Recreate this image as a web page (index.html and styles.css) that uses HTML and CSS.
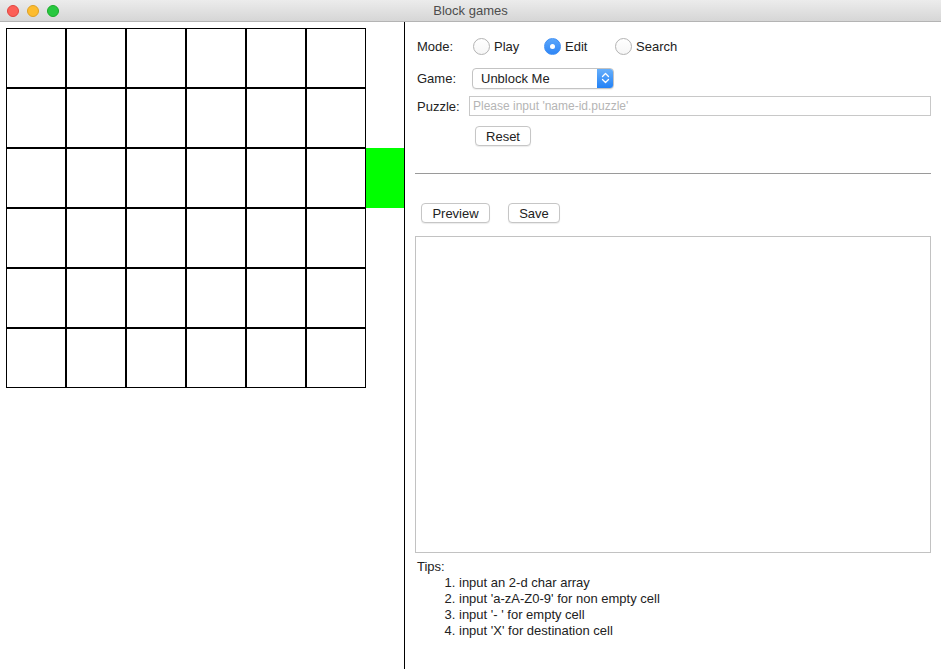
FILE: index.html
```html
<!DOCTYPE html>
<html>
<head>
<meta charset="utf-8">
<title>Block games</title>
<link rel="stylesheet" href="styles.css">
</head>
<body>
<div class="window">
  <div class="titlebar">
    <div class="lights">
      <span class="light red"></span>
      <span class="light yellow"></span>
      <span class="light green"></span>
    </div>
    <div class="title">Block games</div>
  </div>
  <div class="main">
    <div class="board-pane">
      <div class="board">
        <div class="cell"></div><div class="cell"></div><div class="cell"></div><div class="cell"></div><div class="cell"></div><div class="cell"></div><div class="gap"></div>
        <div class="cell"></div><div class="cell"></div><div class="cell"></div><div class="cell"></div><div class="cell"></div><div class="cell"></div><div class="gap"></div>
        <div class="cell"></div><div class="cell"></div><div class="cell"></div><div class="cell"></div><div class="cell"></div><div class="cell"></div><div class="exit"></div>
        <div class="cell"></div><div class="cell"></div><div class="cell"></div><div class="cell"></div><div class="cell"></div><div class="cell"></div><div class="gap"></div>
        <div class="cell"></div><div class="cell"></div><div class="cell"></div><div class="cell"></div><div class="cell"></div><div class="cell"></div><div class="gap"></div>
        <div class="cell"></div><div class="cell"></div><div class="cell"></div><div class="cell"></div><div class="cell"></div><div class="cell"></div><div class="gap"></div>
      </div>
    </div>
    <div class="side">
      <div class="row mode-row">
        <span class="label">Mode:</span>
        <div class="radios">
          <label class="radio"><span class="dot"></span>Play</label>
          <label class="radio"><span class="dot on"></span>Edit</label>
          <label class="radio"><span class="dot"></span>Search</label>
        </div>
      </div>
      <div class="row game-row">
        <span class="label">Game:</span>
        <div class="select">
          <span class="select-text">Unblock Me</span>
          <span class="stepper">
            <svg width="9" height="12" viewBox="0 0 9 12"><path d="M1.5 4.5 L4.5 1.5 L7.5 4.5 M1.5 7.5 L4.5 10.5 L7.5 7.5" fill="none" stroke="#fff" stroke-width="1.3" stroke-linecap="round" stroke-linejoin="round"/></svg>
          </span>
        </div>
      </div>
      <div class="row puzzle-row">
        <span class="label">Puzzle:</span>
        <div class="input"><span class="placeholder">Please input 'name-id.puzzle'</span></div>
      </div>
      <div class="row reset-row">
        <span class="btn reset">Reset</span>
      </div>
      <div class="rule"></div>
      <div class="row actions">
        <span class="btn preview">Preview</span>
        <span class="btn save">Save</span>
      </div>
      <div class="textarea"></div>
      <div class="tips">
        <div class="tips-title">Tips:</div>
        <ol class="tips-list">
          <li>input an 2-d char array</li>
          <li>input 'a-zA-Z0-9' for non empty cell</li>
          <li>input '- ' for empty cell</li>
          <li>input 'X' for destination cell</li>
        </ol>
      </div>
    </div>
  </div>
</div>
</body>
</html>
```
FILE: styles.css
```css
* { box-sizing: border-box; }
html, body {
  margin: 0;
  padding: 0;
  width: 941px;
  height: 669px;
  overflow: hidden;
  background: #fff;
  font-family: "Liberation Sans", Arial, sans-serif;
  font-size: 13px;
  color: #222;
}
.window {
  width: 941px;
  height: 669px;
  display: flex;
  flex-direction: column;
}
.titlebar {
  height: 22px;
  flex: none;
  background: linear-gradient(#ececec, #d6d6d6);
  border-bottom: 1px solid #b4b4b4;
  display: flex;
  align-items: center;
  position: relative;
}
.lights {
  display: flex;
  gap: 8px;
  padding-left: 7px;
}
.light {
  width: 12px;
  height: 12px;
  border-radius: 50%;
  display: block;
}
.light.red { background: #fc5f57; border: 1px solid #e0443e; }
.light.yellow { background: #fdbc2e; border: 1px solid #dea123; }
.light.green { background: #28c840; border: 1px solid #1aab29; }
.title {
  position: absolute;
  left: 0;
  right: 0;
  text-align: center;
  font-size: 13px;
  color: #4d4d4d;
  line-height: 22px;
}
.main {
  flex: 1;
  display: flex;
}
.board-pane {
  width: 405px;
  flex: none;
  padding: 6px 0 0 6px;
  border-right: 1px solid #000;
}
.board {
  display: grid;
  grid-template-columns: repeat(6, 60px) 38px;
  grid-template-rows: repeat(6, 60px);
}
.cell {
  border: 1px solid #000;
  background: #fff;
}
.exit { background: #00ff00; }
.side {
  flex: 1;
  padding: 0 10px 0 10px;
  display: flex;
  flex-direction: column;
}
.row {
  display: flex;
  align-items: center;
}
.label {
  padding-left: 2px;
  width: 56px;
  flex: none;
}
.mode-row { height: 20px; margin-top: 14px; }
.radios { display: flex; margin-left: 2px; }
.radio {
  display: flex;
  align-items: center;
  width: 71px;
  color: #222;
}
.dot {
  width: 17px;
  height: 17px;
  border-radius: 50%;
  border: 1px solid #b3b3b3;
  background: linear-gradient(#fff, #f6f6f6);
  margin-right: 4px;
  position: relative;
  flex: none;
}
.dot.on {
  border-color: #3f8ff5;
  background: linear-gradient(#5aa6fb, #2f86f6);
}
.dot.on::after {
  content: "";
  position: absolute;
  width: 5px;
  height: 5px;
  border-radius: 50%;
  background: #fff;
  left: 5px;
  top: 5px;
}
.game-row { height: 22px; margin-top: 11px; }
.select {
  width: 142px;
  height: 21px;
  margin-left: 1px;
  border: 1px solid #c3c3c3;
  border-radius: 4px;
  display: flex;
  align-items: center;
  justify-content: space-between;
  background: #fff;
  box-shadow: 0 1px 1px rgba(0,0,0,0.06);
  overflow: hidden;
}
.select-text { padding-left: 8px; font-size: 13px; color: #222; }
.stepper {
  width: 17px;
  height: 21px;
  margin: -1px -1px -1px 0;
  background: linear-gradient(#69b1fb, #1f7ff6);
  border-radius: 0 4px 4px 0;
  display: flex;
  align-items: center;
  justify-content: center;
}
.puzzle-row { height: 20px; margin-top: 7px; }
.puzzle-row .label { width: 54px; }
.input {
  flex: 1;
  height: 20px;
  border: 1px solid #c8c8c8;
  display: flex;
  align-items: center;
  padding-left: 3px;
}
.placeholder { color: #b5b5b5; font-size: 12px; }
.btn {
  display: inline-flex;
  align-items: center;
  justify-content: center;
  height: 20px;
  border: 1px solid #c6c6c6;
  border-radius: 4px;
  background: #fff;
  box-shadow: 0 1px 1px rgba(0,0,0,0.08);
  font-size: 13px;
  color: #222;
}
.reset-row { margin-top: 10px; padding-left: 60px; }
.reset { width: 56px; }
.rule {
  height: 1px;
  background: #9a9a9a;
  margin-top: 27px;
}
.actions { margin-top: 29px; padding-left: 6px; gap: 18px; }
.preview { width: 69px; }
.save { width: 52px; }
.textarea {
  height: 317px;
  border: 1px solid #c2c2c2;
  margin-top: 13px;
}
.tips { padding-left: 2px; margin-top: 6px; line-height: 16px; color: #222; }
.tips-list {
  margin: 0;
  padding-left: 42px;
}
.tips-list li { padding-left: 0; }
```
